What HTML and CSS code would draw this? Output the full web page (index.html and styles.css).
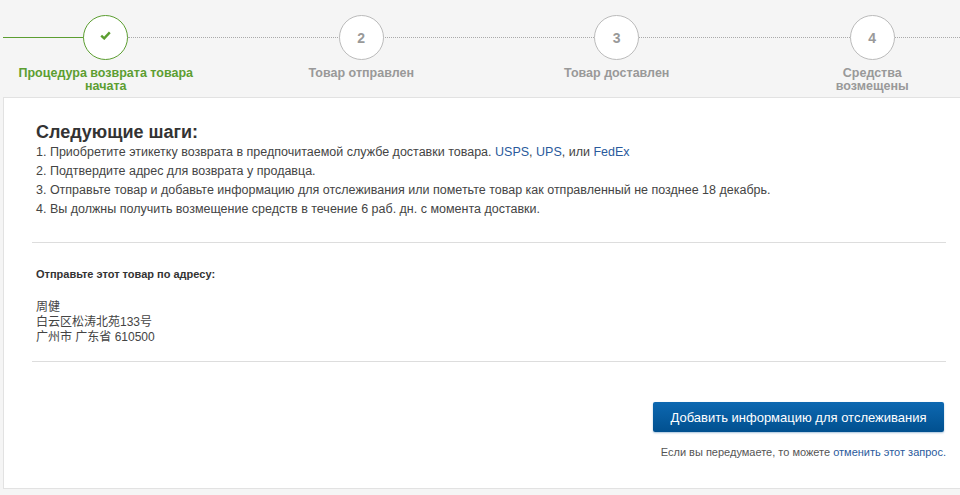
FILE: index.html
```html
<!DOCTYPE html>
<html lang="en">
<head>
  <meta charset="UTF-8">
  <meta name="viewport" content="width=device-width, initial-scale=1.0">
  <title>Возврат товара</title>
  <link rel="stylesheet" href="styles.css">
</head>
<body>
  <div class="stepper">
    <div class="line line-done"></div>
    <div class="line line-todo"></div>
    <div class="step step-done">
      <div class="circle">
        <svg class="check" width="11" height="9" viewBox="0 0 11 9"><path d="M1.2 4.6 4.2 7.4 9.8 1.4" fill="none" stroke="#5c9e31" stroke-width="2.4"/></svg>
      </div>
      <div class="step-label">Процедура возврата товара начата</div>
    </div>
    <div class="step">
      <div class="circle">2</div>
      <div class="step-label">Товар отправлен</div>
    </div>
    <div class="step">
      <div class="circle">3</div>
      <div class="step-label">Товар доставлен</div>
    </div>
    <div class="step">
      <div class="circle">4</div>
      <div class="step-label step-label-narrow">Средства возмещены</div>
    </div>
  </div>

  <div class="card">
    <div class="section section-steps">
      <h2>Следующие шаги:</h2>
      <p>1. Приобретите этикетку возврата в предпочитаемой службе доставки товара. <a href="#">USPS</a>, <a href="#">UPS</a>, или <a href="#">FedEx</a></p>
      <p>2. Подтвердите адрес для возврата у продавца.</p>
      <p>3. Отправьте товар и добавьте информацию для отслеживания или пометьте товар как отправленный не позднее 18 декабрь.</p>
      <p>4. Вы должны получить возмещение средств в течение 6 раб. дн. с момента доставки.</p>
    </div>
    <div class="section section-address">
      <h3>Отправьте этот товар по адресу:</h3>
      <address>周健<br>白云区松涛北苑133号<br>广州市 广东省 610500</address>
    </div>
    <div class="actions">
      <button class="track-btn">Добавить информацию для отслеживания</button>
      <p class="cancel-note">Если вы передумаете, то можете <a href="#">отменить этот запрос.</a></p>
    </div>
  </div>
</body>
</html>
```

FILE: styles.css
```css
/* Global Styles */
html, body { height: 100%; }
body {
  font-family: "Liberation Sans", Arial, "Noto Sans CJK SC", sans-serif;
  background-color: #f5f5f5;
  margin: 0;
  color: #333;
  overflow: hidden;
}
a { color: #2a5a9c; text-decoration: none; }

/* Stepper */
.stepper {
  position: relative;
  display: grid;
  grid-template-columns: repeat(4, 255.5px);
  margin-left: -22px;
  width: 1022px;
  height: 97px;
  padding-top: 15px;
  box-sizing: border-box;
}
.line {
  position: absolute;
  top: 37px;
}
.line-done {
  left: 25px;
  width: 82px;
  border-top: 1px solid #5c9e31;
}
.line-todo {
  left: 150px;
  right: 40px;
  border-top: 1px dotted #aaa;
}
.step {
  position: relative;
  display: flex;
  flex-direction: column;
  align-items: center;
}
.circle {
  display: flex;
  align-items: center;
  justify-content: center;
  width: 43px;
  height: 43px;
  border: 1px solid #bbb;
  border-radius: 50%;
  background: #fff;
  color: #999;
  font-size: 14px;
  font-weight: bold;
}
.step-done .circle { border-color: #5c9e31; }
.check { margin-top: -5px; }
.step-label {
  width: 190px;
  margin-top: 7px;
  font-size: 12.5px;
  line-height: 13px;
  font-weight: bold;
  text-align: center;
  color: #999;
}
.step-done .step-label { color: #5c9e31; }
.step-label-narrow { width: 90px; }

/* Card */
.card {
  margin-left: 3px;
  height: 392px;
  box-sizing: border-box;
  background: #fff;
  border: 1px solid #e2e2e2;
  border-right: none;
  padding: 0 14px 0 28px;
}
.section { border-bottom: 1px solid #ddd; }
.section-steps {
  padding: 24px 0 23px 4px;
}
h2 {
  margin: 0 0 1px;
  font-size: 18px;
  line-height: 20px;
  color: #333;
}
.section-steps p {
  margin: 0;
  font-size: 12.5px;
  line-height: 19px;
  color: #444;
}
.section-address {
  padding: 24px 0 16px 4px;
}
h3 {
  margin: 0 0 19px;
  font-size: 11px;
  line-height: 14px;
  color: #333;
}
address {
  font-style: normal;
  font-size: 12px;
  line-height: 15px;
  color: #444;
}

/* Actions */
.actions {
  display: flex;
  flex-direction: column;
  align-items: flex-end;
  padding-top: 40px;
}
.track-btn {
  width: 291px;
  height: 30px;
  margin-right: 2px;
  border: none;
  border-radius: 2px;
  background: linear-gradient(#0d68b1, #01508f);
  box-shadow: 0 1px 2px rgba(0,80,150,0.35);
  color: #fff;
  font-family: inherit;
  font-size: 13px;
  cursor: pointer;
}
.cancel-note {
  margin: 13px 0 0;
  font-size: 11px;
  line-height: 14px;
  color: #555;
}
```
